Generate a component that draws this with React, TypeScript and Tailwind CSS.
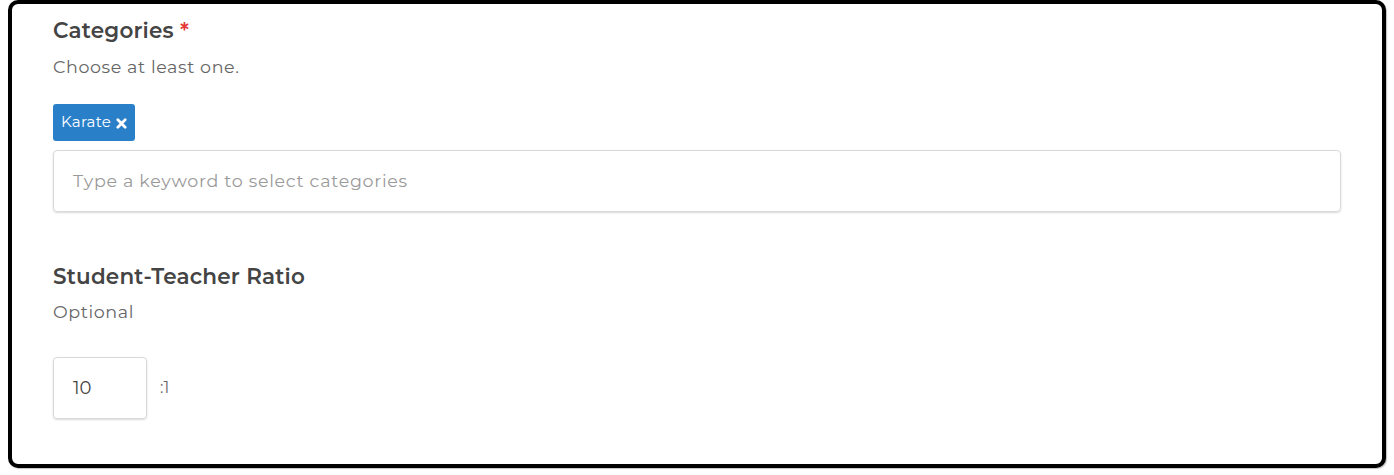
import React from "react";

export default function App() {
  return (
    <div className="w-[1394px] h-[475px] bg-white">
      <div
        className="ml-2 w-[1378px] h-[468px] border-4 border-black rounded-[10px] bg-white shadow-[1px_1px_1px_rgba(0,0,0,0.25)] pl-[41px] pr-[41px] text-[#444]"
        style={{ fontFamily: "Montserrat, Inter, 'Noto Sans', sans-serif" }}
      >
        <div className="pt-[14px] h-[24px] box-content leading-[24px] text-[21.5px] font-semibold text-[#444] tracking-[0.2px]">
          Categories <span className="text-[#e53935]">*</span>
        </div>
        <div className="mt-[13px] h-[24px] leading-[24px] text-[17.5px] text-[#666] tracking-[0.6px]">
          Choose at least one.
        </div>
        <div className="mt-[25px] flex">
          <span className="h-[37px] px-[8px] flex items-center gap-[5px] rounded-[3px] bg-[#2a7fc9] text-white text-[15px] tracking-[0.3px]">
            Karate
            <svg width="11" height="11" viewBox="0 0 12 12" className="mt-[1px]">
              <path d="M2 2 L10 10 M10 2 L2 10" stroke="white" strokeWidth="3" strokeLinecap="round" />
            </svg>
          </span>
        </div>
        <div className="mt-[9px] h-[62px] rounded-[4px] border border-[#d9d9d9] shadow-[0_1px_2px_rgba(0,0,0,0.15)] flex items-center pl-[19px] text-[17.5px] text-[#9a9a9a] tracking-[0.7px]">
          Type a keyword to select categories
        </div>
        <div className="mt-[52px] h-[24px] leading-[24px] text-[21.5px] font-semibold text-[#444] tracking-[0.2px]">
          Student-Teacher Ratio
        </div>
        <div className="mt-[12px] h-[24px] leading-[24px] text-[17.5px] text-[#666] tracking-[0.6px]">
          Optional
        </div>
        <div className="mt-[33px] flex items-center">
          <div className="w-[94px] h-[62px] rounded-[4px] border border-[#d9d9d9] shadow-[0_1px_2px_rgba(0,0,0,0.15)] flex items-center pl-[19px] text-[18px] text-[#444]">
            10
          </div>
          <span className="ml-[13px] text-[16px] text-[#666]">:1</span>
        </div>
      </div>
    </div>
  );
}
